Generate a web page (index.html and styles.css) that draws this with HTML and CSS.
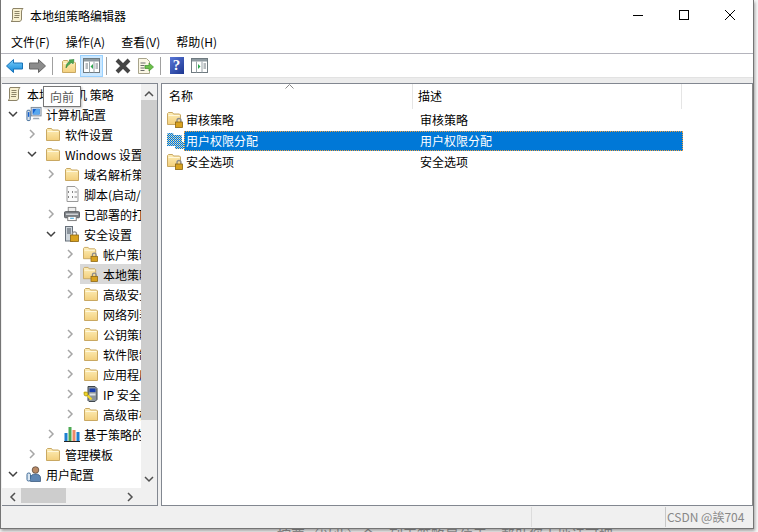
FILE: index.html
```html
<!DOCTYPE html>
<html lang="zh-CN">

<head>
    <meta charset="UTF-8">
    <title>本地组策略编辑器</title>
    <link rel="stylesheet" href="styles.css">
</head>

<body>
    <!-- Icon sheet -->
    <svg class="icon-sheet" width="0" height="0">
        <defs>
            <linearGradient id="blue-arrow" x1="0" y1="0" x2="0" y2="1">
                <stop offset="0" stop-color="#7fd0fb" />
                <stop offset="1" stop-color="#0f86d8" />
            </linearGradient>
            <linearGradient id="folder-fill" x1="0" y1="0" x2="0" y2="1">
                <stop offset="0" stop-color="#fdeeb8" />
                <stop offset="1" stop-color="#f3cf7c" />
            </linearGradient>
            <pattern id="dither" width="2" height="2" patternUnits="userSpaceOnUse">
                <rect width="2" height="2" fill="#0078d7" />
                <rect width="1" height="1" fill="#f4e2a8" />
                <rect x="1" y="1" width="1" height="1" fill="#9cc8e8" />
            </pattern>
            <symbol id="folder" viewBox="0 0 16 16">
                <path d="M1.5 14.5V3.5l1-1h4l1 1.500h6l1 1v9.500z" fill="url(#folder-fill)" stroke="#c9a862" />
                <path d="M2.500 5.500h11" stroke="#fff8dc" fill="none" />
            </symbol>
            <symbol id="folder-lock" viewBox="0 0 17 17">
                <path d="M.5 13.500V2.500l1-1h4l1 1.500h6l1 1v9.500z" fill="url(#folder-fill)" stroke="#c9a862" />
                <path d="M1.500 4.500h11" stroke="#fff8dc" fill="none" />
                <path d="M10 11V9.500a2 2 0 0 1 4 0V11" fill="none" stroke="#8c8c8c" stroke-width="1.300" />
                <rect x="8.500" y="11" width="7" height="5.500" fill="#d9a21f" stroke="#8a6410" stroke-width=".8" />
            </symbol>
            <symbol id="scroll" viewBox="0 0 16 16">
                <path d="M4 1.500h10c-1 1-1.500 2-1.500 3.500v7c0 1.500-1 2.500-2.500 2.500H2c1-.5 1.500-1.500 1.500-2.500V3z" fill="#f8f0d0" stroke="#8d8468" />
                <path d="M5.500 4.500h5M5.500 6.500h5M5.500 8.500h5M5 10.500h5" stroke="#8d8468" fill="none" />
            </symbol>
            <symbol id="computer" viewBox="0 0 17 16">
                <rect x="5.500" y="1" width="10.500" height="9" fill="#dfe6ee" stroke="#7c8794" />
                <rect x="7" y="2.500" width="7.500" height="6" fill="#1360d0" />
                <path d="M7 8.500l4-6h3.500v6z" fill="#58a8ee" />
                <path d="M8 12h5.500l1 1.500H7z" fill="#9aa5b1" />
                <rect x="1" y="4" width="3.500" height="11" rx="1" fill="#dbe4ec" stroke="#3f6a96" />
                <rect x="2" y="6" width="1.500" height="5" fill="#1360d0" />
            </symbol>
            <symbol id="script" viewBox="0 0 16 16">
                <path d="M3 .5h8l3 3v12H3z" fill="#fbfbfb" stroke="#9a9a9a" />
                <path d="M5 5l-1 1 1 1M8 5l1 1-1 1M5 10l-1 1 1 1M8 10l1 1-1 1M10.500 6H13M10.500 11H13" fill="none" stroke="#777" stroke-width=".9" />
            </symbol>
            <symbol id="printer" viewBox="0 0 17 16">
                <rect x="4.500" y="1" width="8" height="5" fill="#eee" stroke="#888" />
                <rect x=".5" y="5.500" width="16" height="6.500" rx="1" fill="#7b7f85" stroke="#55585c" />
                <rect x="2" y="7.500" width="13" height="1.500" fill="#d5d7da" />
                <rect x="4" y="10.500" width="9" height="4.500" fill="#fff" stroke="#777" />
                <rect x="6.500" y="12" width="4" height="1" fill="#2d9bd6" />
            </symbol>
            <symbol id="server-lock" viewBox="0 0 16 16">
                <rect x="1.500" y=".5" width="7" height="14.500" fill="#cfd6dc" stroke="#67707a" />
                <path d="M3 3h4M3 5h4M3 7h4" stroke="#47505a" fill="none" />
                <path d="M8.500 9V7.800a2 2 0 0 1 4 0V9" fill="none" stroke="#8c8c8c" stroke-width="1.300" />
                <rect x="6.500" y="9" width="8" height="6.500" fill="#d9a21f" stroke="#8a6410" stroke-width=".8" />
            </symbol>
            <symbol id="ip-sec" viewBox="0 0 16 16">
                <path d="M5 .5h7l2 2v11l-2 2H6l-1-1z" fill="#8c949c" stroke="#3f464d" />
                <rect x="6.500" y="2.500" width="6" height="3.500" fill="#1a3fb0" />
                <rect x="6.500" y="7.500" width="6" height="2" fill="#dfe3e7" />
                <path d="M1 6l7.500 7.500" stroke="#f1d52a" stroke-width="2.400" />
                <circle cx="3" cy="8" r="2" fill="#f1d52a" stroke="#8a7a10" stroke-width=".6" />
            </symbol>
            <symbol id="chart" viewBox="0 0 16 16">
                <rect x=".5" y="7" width="3" height="8.500" fill="#1d7fd0" />
                <rect x="4.500" y="1" width="3" height="14.500" fill="#4caa52" />
                <rect x="8.500" y="4" width="3" height="11.500" fill="#ec8a6a" />
                <rect x="12.500" y="6" width="3" height="9.500" fill="#1d7fd0" />
                <rect y="15" width="16" height="1" fill="#222" />
            </symbol>
            <symbol id="user" viewBox="0 0 16 16">
                <circle cx="9.500" cy="4" r="3.300" fill="#b98a66" stroke="#5d4a3c" stroke-width=".8" />
                <path d="M4.500 15.500v-3.500c0-2.500 2-4 5-4s5 1.500 5 4v3.500z" fill="#5f86b3" stroke="#3c5c80" stroke-width=".8" />
                <rect x="1" y="7" width="3.500" height="8" rx="1.500" fill="#dbe7f2" stroke="#3f6a96" />
            </symbol>
            <symbol id="chev-right" viewBox="0 0 10 10">
                <path d="M3 1l4 4-4 4" fill="none" stroke="currentColor" stroke-width="1.500" />
            </symbol>
            <symbol id="chev-down" viewBox="0 0 10 10">
                <path d="M1 3l4 4 4-4" fill="none" stroke="currentColor" stroke-width="1.500" />
            </symbol>
            <symbol id="chev-left" viewBox="0 0 10 10">
                <path d="M7 1L3 5l4 4" fill="none" stroke="currentColor" stroke-width="1.500" />
            </symbol>
            <symbol id="chev-up" viewBox="0 0 10 10">
                <path d="M1 7l4-4 4 4" fill="none" stroke="currentColor" stroke-width="1.500" />
            </symbol>
        </defs>
    </svg>

    <div class="window">
        <div class="titlebar">
            <svg class="title-icon"><use href="#scroll" /></svg>
            <span class="title-text">本地组策略编辑器</span>
            <div class="win-buttons">
                <div class="win-btn">
                    <svg width="10" height="10"><path d="M0 5.500h10" stroke="#000" /></svg>
                </div>
                <div class="win-btn">
                    <svg width="10" height="10"><rect x=".5" y=".5" width="9" height="9" fill="none" stroke="#000" /></svg>
                </div>
                <div class="win-btn">
                    <svg width="10" height="10"><path d="M0 0l10 10M10 0L0 10" stroke="#000" stroke-width="1" /></svg>
                </div>
            </div>
        </div>

        <div class="menubar">
            <span class="menu-item">文件(F)</span>
            <span class="menu-item">操作(A)</span>
            <span class="menu-item">查看(V)</span>
            <span class="menu-item">帮助(H)</span>
        </div>

        <div class="toolbar">
            <div class="tool">
                <svg width="17" height="14" viewBox="0 0 17 14"><path d="M7.500.5L.5 7l7 6.500V10h9V4h-9z" fill="url(#blue-arrow)" stroke="#1873b8" /></svg>
            </div>
            <div class="tool">
                <svg width="17" height="14" viewBox="0 0 17 14"><path d="M9.500.5l7 6.500-7 6.500V10h-9V4h9z" fill="#8c8c8c" stroke="#666" /></svg>
            </div>
            <div class="tool-sep"></div>
            <div class="tool">
                <svg width="16" height="16" viewBox="0 0 16 16">
                    <use href="#folder" />
                    <path d="M5 10c0-4 2-6 4-6.500L8 2l5-.5-1 4.500-1-1.500C9 5.500 7 7 5 10z" fill="#4caa52" stroke="#2e7d36" stroke-width=".6" />
                </svg>
            </div>
            <div class="tool tool-active">
                <svg width="17" height="15" viewBox="0 0 17 15">
                    <rect x=".5" y=".5" width="16" height="14" fill="#fff" stroke="#6f7a80" />
                    <rect x="1" y="1" width="15" height="2.500" fill="#8e9aa0" />
                    <path d="M6.500 3.500v11M11 3.500v11" stroke="#9aa5aa" />
                    <path d="M2.500 6h2.500M2.500 8h2.500M2.500 10h2.500M12.500 6h2.500M12.500 8h2.500M12.500 10h2.500" stroke="#6f7a80" />
                    <path d="M10 6v5L7.500 8.500z" fill="#2fa84f" />
                </svg>
            </div>
            <div class="tool-sep"></div>
            <div class="tool">
                <svg width="16" height="16" viewBox="0 0 16 16"><path d="M2 2l12 12M14 2L2 14" stroke="#454545" stroke-width="4" /></svg>
            </div>
            <div class="tool">
                <svg width="17" height="16" viewBox="0 0 17 16">
                    <path d="M1.500.5h8l3 3v12h-11z" fill="#fbf7e4" stroke="#a8a48c" />
                    <path d="M3.500 5h5M3.500 7.500h4M3.500 10h4M3.500 12.500h4" stroke="#6b6b6b" />
                    <path d="M8 7.500h4V5l4.500 4-4.500 4v-2.500H8z" fill="#6cc04a" stroke="#3f8f2c" stroke-width=".7" />
                </svg>
            </div>
            <div class="tool-sep"></div>
            <div class="tool">
                <span class="help-icon">?</span>
            </div>
            <div class="tool">
                <svg width="17" height="15" viewBox="0 0 17 15">
                    <rect x=".5" y=".5" width="16" height="14" fill="#fff" stroke="#6f7a80" />
                    <rect x="1" y="1" width="15" height="2.500" fill="#8e9aa0" />
                    <path d="M5.500 3.500v11M11 3.500v11" stroke="#9aa5aa" />
                    <path d="M12.500 6h2.500M12.500 8h2.500M12.500 10h2.500" stroke="#6f7a80" />
                    <path d="M7 6v5l2.500-2.500z" fill="#2fa84f" />
                </svg>
            </div>
        </div>
        <div class="toolbar-band"></div>

        <div class="panes">
            <div class="tree-pane">
                <div class="tree-top">
                    <div class="tree-body">
                        <div class="tree-row lv0">
                            <svg class="node-icon"><use href="#scroll" /></svg>
                            <span>本地计算机 策略</span>
                        </div>
                        <div class="tree-row lv1">
                            <svg class="arrow open"><use href="#chev-down" /></svg>
                            <svg class="node-icon"><use href="#computer" /></svg>
                            <span>计算机配置</span>
                        </div>
                        <div class="tree-row lv2">
                            <svg class="arrow"><use href="#chev-right" /></svg>
                            <svg class="node-icon"><use href="#folder" /></svg>
                            <span>软件设置</span>
                        </div>
                        <div class="tree-row lv2">
                            <svg class="arrow open"><use href="#chev-down" /></svg>
                            <svg class="node-icon"><use href="#folder" /></svg>
                            <span>Windows 设置</span>
                        </div>
                        <div class="tree-row lv3">
                            <svg class="arrow"><use href="#chev-right" /></svg>
                            <svg class="node-icon"><use href="#folder" /></svg>
                            <span>域名解析策略</span>
                        </div>
                        <div class="tree-row lv3">
                            <span class="arrow"></span>
                            <svg class="node-icon"><use href="#script" /></svg>
                            <span>脚本(启动/关机)</span>
                        </div>
                        <div class="tree-row lv3">
                            <svg class="arrow"><use href="#chev-right" /></svg>
                            <svg class="node-icon"><use href="#printer" /></svg>
                            <span>已部署的打印机</span>
                        </div>
                        <div class="tree-row lv3">
                            <svg class="arrow open"><use href="#chev-down" /></svg>
                            <svg class="node-icon"><use href="#server-lock" /></svg>
                            <span>安全设置</span>
                        </div>
                        <div class="tree-row lv4">
                            <svg class="arrow"><use href="#chev-right" /></svg>
                            <svg class="node-icon"><use href="#folder-lock" /></svg>
                            <span>帐户策略</span>
                        </div>
                        <div class="tree-row lv4">
                            <svg class="arrow"><use href="#chev-right" /></svg>
                            <div class="node-current">
                                <svg class="node-icon"><use href="#folder-lock" /></svg>
                                <span>本地策略</span>
                            </div>
                        </div>
                        <div class="tree-row lv4">
                            <svg class="arrow"><use href="#chev-right" /></svg>
                            <svg class="node-icon"><use href="#folder" /></svg>
                            <span>高级安全 Windows 防火墙</span>
                        </div>
                        <div class="tree-row lv4">
                            <span class="arrow"></span>
                            <svg class="node-icon"><use href="#folder" /></svg>
                            <span>网络列表管理器策略</span>
                        </div>
                        <div class="tree-row lv4">
                            <svg class="arrow"><use href="#chev-right" /></svg>
                            <svg class="node-icon"><use href="#folder" /></svg>
                            <span>公钥策略</span>
                        </div>
                        <div class="tree-row lv4">
                            <svg class="arrow"><use href="#chev-right" /></svg>
                            <svg class="node-icon"><use href="#folder" /></svg>
                            <span>软件限制策略</span>
                        </div>
                        <div class="tree-row lv4">
                            <svg class="arrow"><use href="#chev-right" /></svg>
                            <svg class="node-icon"><use href="#folder" /></svg>
                            <span>应用程序控制策略</span>
                        </div>
                        <div class="tree-row lv4">
                            <svg class="arrow"><use href="#chev-right" /></svg>
                            <svg class="node-icon"><use href="#ip-sec" /></svg>
                            <span>IP 安全策略</span>
                        </div>
                        <div class="tree-row lv4">
                            <svg class="arrow"><use href="#chev-right" /></svg>
                            <svg class="node-icon"><use href="#folder" /></svg>
                            <span>高级审核策略配置</span>
                        </div>
                        <div class="tree-row lv3">
                            <svg class="arrow"><use href="#chev-right" /></svg>
                            <svg class="node-icon"><use href="#chart" /></svg>
                            <span>基于策略的 QoS</span>
                        </div>
                        <div class="tree-row lv2">
                            <svg class="arrow"><use href="#chev-right" /></svg>
                            <svg class="node-icon"><use href="#folder" /></svg>
                            <span>管理模板</span>
                        </div>
                        <div class="tree-row lv1">
                            <svg class="arrow open"><use href="#chev-down" /></svg>
                            <svg class="node-icon"><use href="#user" /></svg>
                            <span>用户配置</span>
                        </div>
                    </div>
                    <div class="vscroll">
                        <svg class="scroll-arrow"><use href="#chev-up" /></svg>
                        <div class="vscroll-thumb"></div>
                        <svg class="scroll-arrow"><use href="#chev-down" /></svg>
                    </div>
                </div>
                <div class="hscroll">
                    <svg class="scroll-arrow"><use href="#chev-left" /></svg>
                    <div class="hscroll-track">
                        <div class="hscroll-thumb"></div>
                    </div>
                    <svg class="scroll-arrow"><use href="#chev-right" /></svg>
                </div>
            </div>

            <div class="list-pane">
                <div class="list-head">
                    <div class="col-name">名称</div>
                    <div class="col-desc">描述</div>
                    <svg class="sort-caret" width="9" height="5" viewBox="0 0 9 5"><path d="M.5 4.500l4-4 4 4" fill="none" stroke="#888" /></svg>
                </div>
                <div class="list-row">
                    <svg class="node-icon"><use href="#folder-lock" /></svg>
                    <div class="list-cells">
                        <span class="col-name">审核策略</span>
                        <span class="col-desc">审核策略</span>
                    </div>
                </div>
                <div class="list-row selected">
                    <svg class="node-icon" viewBox="0 0 17 17">
                        <path d="M0 14V2l1-1h5l1 2h7l1 1v6h2v7H8v-3z" fill="url(#dither)" />
                    </svg>
                    <div class="list-cells">
                        <span class="col-name">用户权限分配</span>
                        <span class="col-desc">用户权限分配</span>
                    </div>
                </div>
                <div class="list-row">
                    <svg class="node-icon"><use href="#folder-lock" /></svg>
                    <div class="list-cells">
                        <span class="col-name">安全选项</span>
                        <span class="col-desc">安全选项</span>
                    </div>
                </div>
            </div>
        </div>

        <div class="statusbar">
            <div class="status-cell status-main"></div>
            <div class="status-cell status-mid"></div>
            <div class="status-cell status-mark">CSDN @誒704</div>
        </div>

        <!-- Tooltip over the tree -->
        <div class="tooltip">向前</div>
    </div>

    <div class="behind">按要（以此）令，列表策略是位于，帮助您小地读可把</div>
</body>

</html>
```

FILE: styles.css
```css
html, body {
    margin: 0;
    height: 100%;
    overflow: hidden;
}

body {
    background-color: #f7f7f7;
    font-family: "Noto Sans CJK SC", "Liberation Sans", sans-serif;
    font-size: 12px;
    color: #000;
}

.icon-sheet {
    position: absolute;
}

.window {
    position: relative;
    box-sizing: border-box;
    display: flex;
    flex-direction: column;
    width: 754px;
    height: 529px;
    background-color: #fff;
    border: solid #757575;
    border-width: 0 1px 1px 1px;
    box-shadow: 1px 2px 3px rgba(0, 0, 0, 0.35);
}

/* Title bar */
.titlebar {
    display: flex;
    align-items: center;
    height: 30px;
    flex: none;
}

.title-icon {
    width: 16px;
    height: 16px;
    margin-left: 8px;
}

.title-text {
    margin-left: 5px;
}

.win-buttons {
    display: flex;
    margin-left: auto;
}

.win-btn {
    display: flex;
    align-items: center;
    justify-content: center;
    width: 46px;
    height: 30px;
}

/* Menu bar */
.menubar {
    display: flex;
    align-items: center;
    flex: none;
    height: 23px;
    padding-left: 2px;
    border-bottom: 1px solid #b4b4bc;
}

.menu-item {
    padding: 0 8px;
}

/* Toolbar */
.toolbar {
    display: flex;
    align-items: center;
    flex: none;
    height: 23px;
    padding-left: 2px;
}

.tool {
    box-sizing: border-box;
    display: flex;
    align-items: center;
    justify-content: center;
    width: 23px;
    height: 22px;
}

.tool-active {
    background-color: #cce8ff;
    border: 1px solid #99d1ff;
}

.tool-sep {
    width: 1px;
    height: 18px;
    margin: 0 4px 0 3px;
    background-color: #a0a0a0;
}

.help-icon {
    display: block;
    width: 14px;
    height: 17px;
    background: linear-gradient(135deg, #5a78d8, #1c3690);
    color: #fff;
    font: bold 15px/17px "Liberation Serif", serif;
    text-align: center;
}

.toolbar-band {
    flex: none;
    height: 6px;
    background-color: #ececec;
    border-top: 1px solid #e2e2e2;
    box-sizing: border-box;
}

/* Panes */
.panes {
    flex: 1;
    display: flex;
    gap: 3px;
    min-height: 0;
    background-color: #f0f0f0;
}

.tree-pane {
    box-sizing: border-box;
    display: flex;
    flex-direction: column;
    width: 156px;
    margin-left: 1px;
    border: solid #828790;
    border-width: 1px 1px 1px 0;
}

.tree-top {
    flex: 1;
    display: flex;
    min-height: 0;
}

.tree-body {
    flex: 1;
    min-width: 0;
    overflow: hidden;
    background-color: #fff;
}

.tree-row {
    display: flex;
    align-items: center;
    height: 20px;
    white-space: nowrap;
}

.lv0 { padding-left: 4px; }
.lv1 { padding-left: 6px; }
.lv2 { padding-left: 25px; }
.lv3 { padding-left: 44px; }
.lv4 { padding-left: 63px; }

.arrow {
    flex: none;
    width: 10px;
    height: 10px;
    margin-right: 8px;
    color: #a6a6a6;
}

.arrow.open {
    color: #404040;
}

.node-icon {
    flex: none;
    width: 16px;
    height: 16px;
    margin-right: 4px;
}

.lv0 .node-icon {
    margin-right: 5px;
}

.node-current {
    display: flex;
    align-items: center;
    flex: 1;
    height: 20px;
    margin-left: -3px;
    padding-left: 3px;
    background-color: #d9d9d9;
}

/* Scroll bars */
.vscroll {
    flex: none;
    display: flex;
    flex-direction: column;
    align-items: center;
    justify-content: space-between;
    width: 16px;
    background-color: #f0f0f0;
}

.vscroll-thumb {
    flex: none;
    width: 16px;
    height: 320px;
    margin-top: 1px;
    margin-bottom: 54px;
    background-color: #cdcdcd;
}

.scroll-arrow {
    flex: none;
    width: 10px;
    height: 10px;
    color: #505050;
}

.vscroll .scroll-arrow:first-child {
    margin-top: 5px;
}

.vscroll .scroll-arrow:last-child {
    margin-bottom: 4px;
}

.hscroll {
    flex: none;
    display: flex;
    align-items: center;
    height: 17px;
    padding: 0 22px 0 6px;
    background-color: #f0f0f0;
}

.hscroll-track {
    flex: 1;
    height: 15px;
    margin-bottom: 2px;
}

.hscroll-thumb {
    width: 45px;
    height: 15px;
    margin-left: 3px;
    background-color: #cdcdcd;
}

/* List */
.list-pane {
    flex: 1;
    box-sizing: border-box;
    margin-right: 0;
    background-color: #fff;
    border: solid #828790;
    border-width: 1px 0 1px 1px;
    box-shadow: inset -1px 0 0 #8a8a8a;
}

.list-head {
    position: relative;
    display: flex;
    align-items: center;
    height: 25px;
    margin-bottom: 0;
}

.list-head .col-name {
    box-sizing: border-box;
    width: 251px;
    height: 25px;
    line-height: 24px;
    padding-left: 7px;
    border-right: 1px solid #e5e5e5;
}

.list-head .col-desc {
    box-sizing: border-box;
    width: 269px;
    height: 25px;
    line-height: 24px;
    padding-left: 5px;
    border-right: 1px solid #e5e5e5;
}

.sort-caret {
    position: absolute;
    left: 123px;
    top: 0;
}

.list-row {
    display: flex;
    align-items: center;
    height: 21px;
    padding-left: 5px;
}

.list-row .node-icon {
    width: 17px;
    height: 17px;
    margin-right: 0;
}

.list-cells {
    box-sizing: border-box;
    display: flex;
    align-items: center;
    width: 499px;
    height: 20px;
    padding-left: 1px;
    border: 1px dotted transparent;
}

.list-cells .col-name {
    width: 234px;
}

.selected .list-cells {
    background-color: #0078d7;
    border-color: #f0a040;
    color: #fff;
}

/* Status bar */
.statusbar {
    flex: none;
    display: flex;
    height: 22px;
    background-color: #f0f0f0;
}

.status-cell {
    box-sizing: border-box;
    height: 20px;
    margin-top: 1px;
}

.status-main {
    width: 531px;
    border-right: 1px solid #dcdcdc;
}

.status-mid {
    width: 134px;
    border-right: 1px solid #c8c8c8;
}

.status-mark {
    padding-left: 1px;
    line-height: 20px;
    color: #888;
    white-space: nowrap;
}

/* Tooltip */
.tooltip {
    position: absolute;
    left: 42px;
    top: 86px;
    box-sizing: border-box;
    width: 38px;
    height: 21px;
    line-height: 20px;
    text-align: center;
    background-color: #fff;
    border: 1px solid #767676;
    box-shadow: 1px 1px 2px rgba(0, 0, 0, 0.25);
    color: #575757;
}

/* Page behind the window */
.behind {
    height: 3px;
    padding-left: 277px;
    overflow: hidden;
    line-height: 10px;
    color: #999;
    font-size: 14px;
    white-space: nowrap;
}
```
